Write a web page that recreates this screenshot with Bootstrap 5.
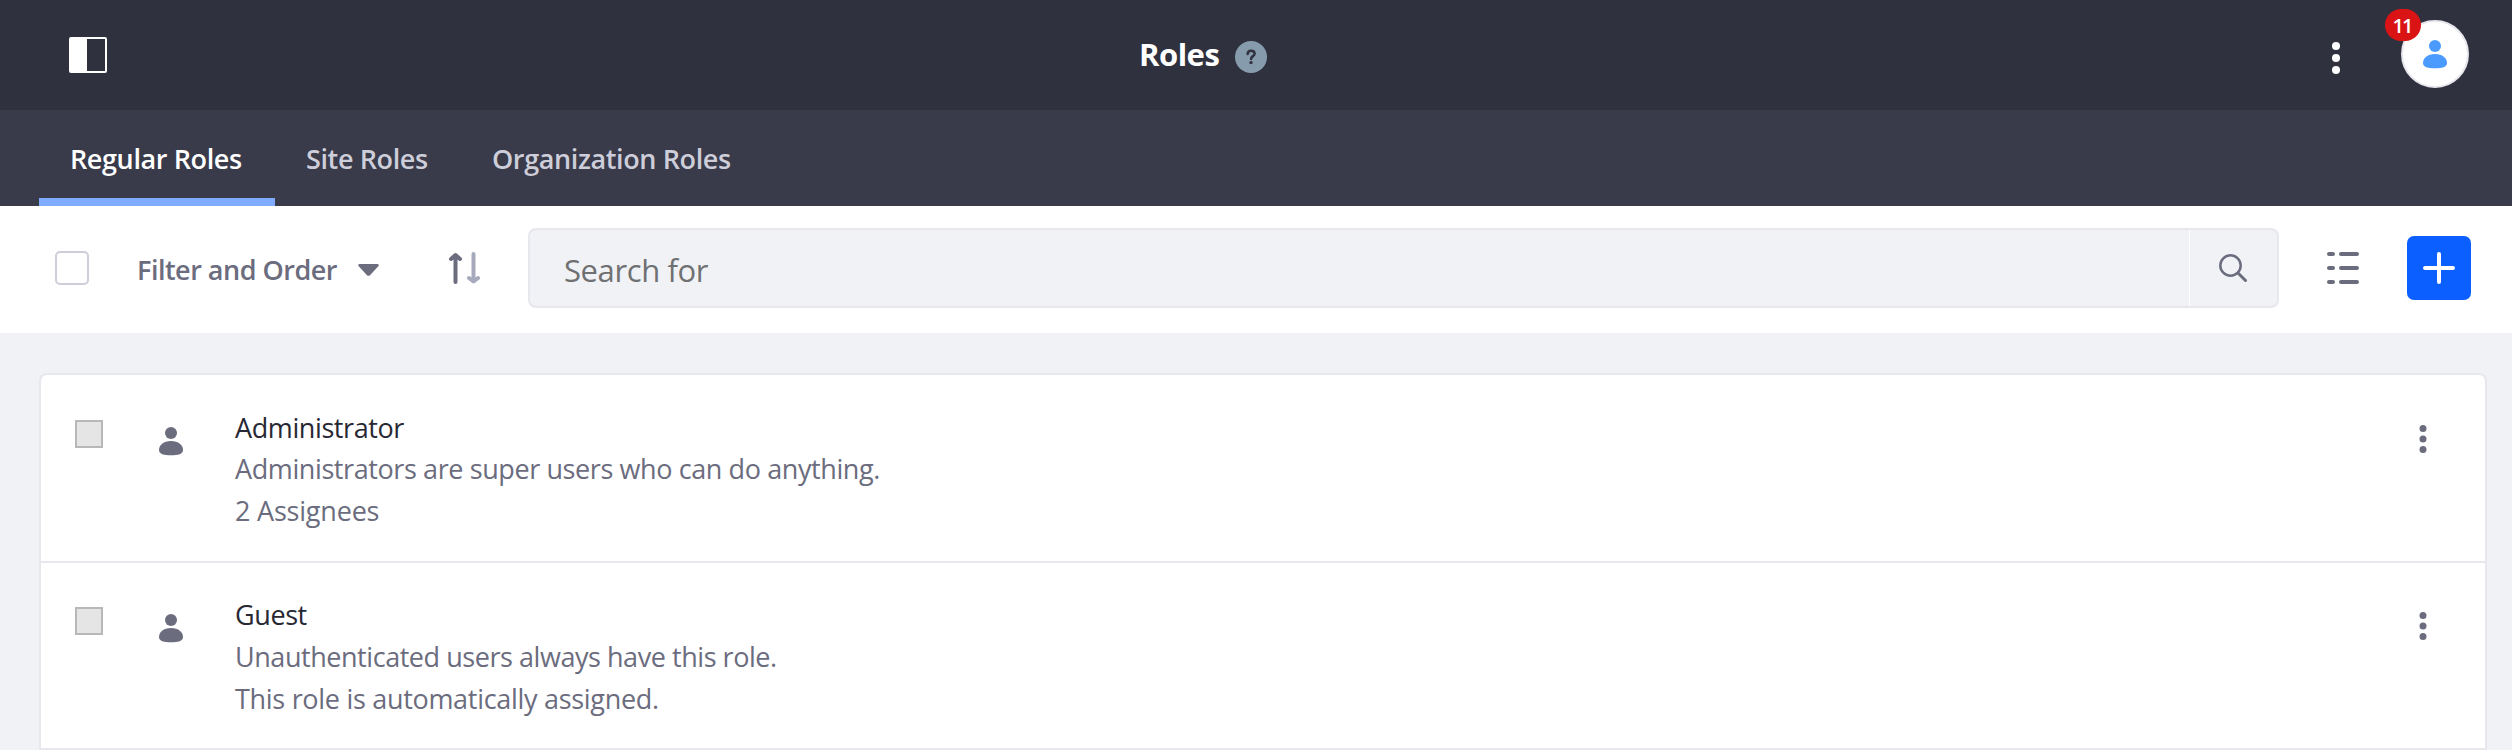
<!DOCTYPE html>
<html lang="en">
<head>
<meta charset="utf-8">
<title>Roles</title>
<meta name="viewport" content="width=device-width, initial-scale=1">
<link rel="stylesheet" href="https://cdn.jsdelivr.net/npm/bootstrap@5.3.0/dist/css/bootstrap.min.css">
<style>
body{font-family:"Open Sans","Noto Sans",sans-serif;font-size:27px;line-height:42px;letter-spacing:-.4px;color:#6b6c7e;background:#f1f2f5;overflow:hidden}
svg{display:block;flex:none;fill:currentColor}
.control-bar{height:110px;background:#30313f;color:#fff;display:grid;grid-template-columns:1070px auto 1fr;padding:0 43px 0 69px}
.control-bar h1{font-size:31px;font-weight:700;line-height:42px;letter-spacing:-.5px;margin:0 16px 2px 0}
.help-icon{margin-top:4px}
.more-menu{margin-right:61px;margin-top:6px}
.avatar{width:68px;height:68px;background:#fff;border:2px solid #e7e7ed;color:#4b9bff;margin-bottom:2px}
.alert-count{position:absolute;left:-18px;top:-13px;width:36px;height:32px;border-radius:16px;background:#da1414;color:#fff;font-size:20px;font-weight:600;line-height:34px;letter-spacing:-2px;padding-right:2px;text-align:center}
.role-tabs{height:96px;background:#393a4a;padding-left:39px}
.role-tabs .nav-link{height:96px;padding:26px 31px 0;color:#cdced9;font-weight:600;line-height:45px;letter-spacing:-.38px;border-radius:0;white-space:nowrap}
.role-tabs .nav-link.active{width:236px;padding-right:0;padding-left:31px;color:#fff;border-bottom:8px solid #80acff}
.role-tabs .site-tab{width:186px;padding-right:0;padding-left:31px}
.toolbar{height:127px;padding:0 41px 0 55px;background:#fff}
.select-all{width:34px;height:34px;border:2px solid #cdced9;border-radius:5px;background:#fff;margin:-3px 0 0}
.filter-btn{margin-left:47px;width:243px;padding-left:1px;font-weight:600;letter-spacing:-.5px;white-space:nowrap}
.sort-btn{margin:-3px 0 0 70px}
.search-box{height:80px;margin:-3px 0 0 48px;background:#f1f2f5;border:2px solid #e7e7ed;border-radius:8px}
.search-box input{font-size:31px;letter-spacing:-.4px;color:#6b6c7e;background:none;border:0;border-right:1px solid #fff;padding:3px 0 0 34px;min-width:0;outline:0}
.search-box input::placeholder{color:#6f7072;opacity:1}
.search-go{width:87px;padding-right:1px}
.view-btn{margin:-3px 0 0 48px}
.add-btn{width:64px;height:64px;margin:-3px 0 0 48px;background:#0b5fff;color:#fff;border-radius:7px}
.role-list{margin:40px 25px 0 39px;border:2px solid #e7e7ed;border-bottom:0;border-radius:8px 8px 0 0;background:#fff}
.role-row{height:186px;padding:32px 52px 0 34px}
.role-row + .role-row{height:189px;border-top:2px solid #e7e7ed;border-bottom:2px solid #e7e7ed;padding-top:31px}
.role-check{width:28px;height:28px;margin-top:13px;background:#e5e5e5;border:2px solid #b8b8b8}
.role-icon{margin:20px 0 0 56px}
.role-text{margin-left:52px;white-space:nowrap}
.role-name{color:#272833}
.first-name{line-height:41px}
.access-note{letter-spacing:-.45px}
.auto-note{letter-spacing:-.3px}
.assignees{letter-spacing:-.2px}
.role-more{margin-top:18px}
</style>
</head>
<body>
<svg class="d-none">
  <symbol id="user" viewBox="0 0 24 29"><circle cx="12" cy="6" r="6"/><path d="M12 14C4.500 14 0 18 0 23C0 27 5 28.300 12 28.300S24 27 24 23C24 18 19.500 14 12 14Z"/></symbol>
  <symbol id="dots" viewBox="0 0 8 32"><circle cx="4" cy="4" r="4"/><circle cx="4" cy="16" r="4"/><circle cx="4" cy="28" r="4"/></symbol>
</svg>

<header class="control-bar align-items-center">
  <svg width="38" height="36" viewBox="0 0 38 36"><rect x="1" y="1" width="36" height="34" rx="1" fill="none" stroke="#fff" stroke-width="2"/><path d="M1 1h17v34H1z"/></svg>
  <div class="d-flex align-items-center">
    <h1>Roles</h1>
    <svg class="help-icon" width="32" height="32" viewBox="0 0 32 32"><circle cx="16" cy="16" r="16" fill="#869cad"/><path d="M12.700 13c0-2.200 1.400-3.300 3.400-3.300s3.500 1.200 3.500 3c0 2.500-3.500 2.400-3.500 5.300" fill="none" stroke="#30313f" stroke-width="2.500" stroke-linecap="round"/><circle cx="16" cy="21.600" r="1.700" fill="#30313f"/></svg>
  </div>
  <div class="d-flex justify-content-end align-items-center">
    <svg class="more-menu" width="8" height="32"><use href="#dots"/></svg>
    <div class="avatar rounded-circle position-relative d-flex align-items-center justify-content-center">
      <svg width="24" height="29"><use href="#user"/></svg>
      <span class="alert-count">11</span>
    </div>
  </div>
</header>

<nav class="role-tabs nav">
  <a class="nav-link active">Regular Roles</a>
  <a class="nav-link site-tab">Site Roles</a>
  <a class="nav-link">Organization Roles</a>
</nav>

<div class="toolbar d-flex align-items-center">
  <div class="select-all flex-shrink-0"></div>
  <div class="filter-btn d-flex align-items-center justify-content-between flex-shrink-0">Filter and Order
    <svg width="21" height="12" viewBox="0 0 21 12"><path d="M1.500 0h18q2 .5 1 2L12 11.200q-1.500 1.200-3 0L.5 2Q-.5.500 1.500 0z"/></svg>
  </div>
  <svg class="sort-btn" width="31" height="32" viewBox="0 0 31 32" fill="none" stroke-width="4" stroke-linecap="round" stroke-linejoin="round"><path d="M6.500 3v27M2 7l4.500-4L11 7" fill="none" stroke="#6b6c7e"/><path d="M24.500 2v27M20 26l4.500 3.500L29 26" fill="none" stroke="#a7a9bc"/></svg>
  <div class="search-box d-flex flex-grow-1">
    <input class="flex-grow-1" type="text" placeholder="Search for">
    <div class="search-go d-flex align-items-center justify-content-center">
      <svg width="28" height="28" viewBox="0 0 28 28"><g fill="none" stroke="#6b6c7e" stroke-linecap="round"><circle cx="11.500" cy="11.500" r="10.200" stroke-width="2.500"/><path d="M19 19l7.500 7.500" stroke-width="3"/></g></svg>
    </div>
  </div>
  <svg class="view-btn" width="32" height="32" viewBox="0 0 32 32"><path d="M2 2h4M14 2h16M2 16h4M14 16h16M2 30h4M14 30h16" stroke="#6b6c7e" stroke-width="4" stroke-linecap="round"/></svg>
  <div class="add-btn d-flex align-items-center justify-content-center flex-shrink-0">
    <svg width="32" height="32" viewBox="0 0 32 32"><path d="M16 2v28M2 16h28" stroke="#fff" stroke-width="4" stroke-linecap="round"/></svg>
  </div>
</div>

<main class="role-list">
  <div class="role-row d-flex align-items-start">
    <div class="role-check"></div>
    <svg class="role-icon" width="24" height="29"><use href="#user"/></svg>
    <div class="role-text flex-grow-1">
      <div class="role-name first-name">Administrator</div>
      <div>Administrators are super users who can do anything.</div>
      <div class="assignees">2 Assignees</div>
    </div>
    <svg class="role-more" width="22" height="28" viewBox="0 0 22 28"><use href="#dots" x="8" width="8" height="28"/></svg>
  </div>
  <div class="role-row d-flex align-items-start">
    <div class="role-check"></div>
    <svg class="role-icon" width="24" height="29"><use href="#user"/></svg>
    <div class="role-text flex-grow-1">
      <div class="role-name">Guest</div>
      <div class="access-note">Unauthenticated users always have this role.</div>
      <div class="auto-note">This role is automatically assigned.</div>
    </div>
    <svg class="role-more" width="22" height="28" viewBox="0 0 22 28"><use href="#dots" x="8" width="8" height="28"/></svg>
  </div>
</main>
<script src="https://cdn.jsdelivr.net/npm/bootstrap@5.3.0/dist/js/bootstrap.bundle.min.js"></script>
</body>
</html>
